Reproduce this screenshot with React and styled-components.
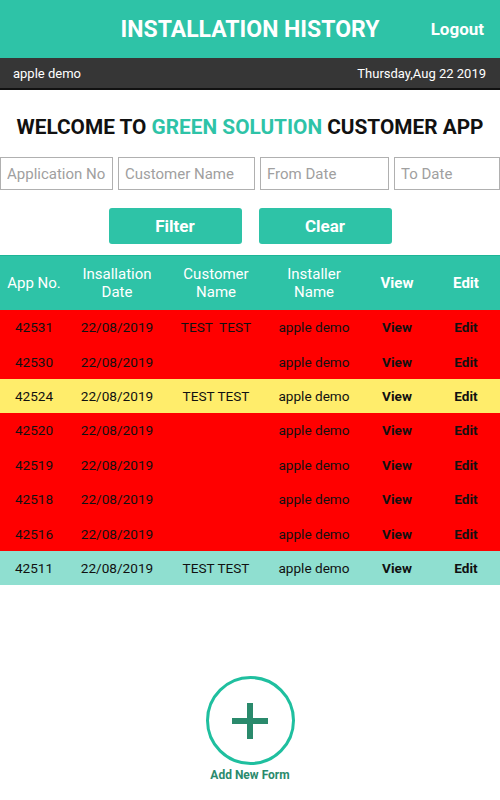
import styled, { createGlobalStyle } from 'styled-components';

const GlobalStyle = createGlobalStyle`
	body {
		margin: 0;
		font-family: Roboto, "Liberation Sans", sans-serif;
		background: #fff;
	}
`;

const teal = '#2ec3a7';

const Page = styled.div`
	display: flex;
	flex-direction: column;
	min-height: 800px;
`;

const Header = styled.header`
	display: grid;
	grid-template-columns: 1fr auto 1fr;
	align-items: center;
	height: 58px;
	background: ${teal};
	color: #fff;
	padding: 0 16px;
`;

const Title = styled.h1`
	grid-column: 2;
	margin: 0;
	font-size: 23px;
	font-weight: bold;
`;

const Logout = styled.span`
	justify-self: end;
	font-size: 17px;
	font-weight: bold;
`;

const UserBar = styled.div`
	display: flex;
	justify-content: space-between;
	align-items: center;
	height: 30px;
	padding: 0 14px 0 13px;
	background: #363636;
	border-bottom: 2px solid #111;
	color: #fff;
	font-size: 13px;
`;

const Welcome = styled.h2`
	margin: 25px 0 18px;
	text-align: center;
	font-size: 20.8px;
	font-weight: bold;
	color: #111;

	span {
		color: #2ec3a7;
	}
`;

const Filters = styled.div`
	display: grid;
	grid-template-columns: 113px 137px 129px 106px;
	gap: 5px;
`;

const Input = styled.input`
	height: 33px;
	box-sizing: border-box;
	border: 1px solid #b0b0b0;
	padding: 0 6px;
	font-family: inherit;
	font-size: 15px;
	min-width: 0;

	&::placeholder {
		color: #a0a0a0;
	}
`;

const Buttons = styled.div`
	display: flex;
	justify-content: center;
	gap: 17px;
	margin: 18px 0 11px;
`;

const Button = styled.button`
	width: 133px;
	height: 36px;
	border: none;
	border-radius: 3px;
	background: ${teal};
	color: #fff;
	font-family: inherit;
	font-size: 17px;
	font-weight: bold;
`;

const cols = '68px 98px 100px 96px 70px 68px';

const HeadRow = styled.div`
	display: grid;
	grid-template-columns: ${cols};
	align-items: center;
	height: 54px;
	background: ${teal};
	border-top: 1px solid #1db596;
	color: #fff;
	font-size: 15px;
	line-height: 18px;
	text-align: center;
`;

const HeadCell = styled.div`
	font-weight: ${(p) => (p.bold ? 'bold' : 'normal')};
`;

const rowColors = {
	red: '#ff0000',
	yellow: '#ffed6b',
	green: '#8fdfd0',
};

const Row = styled.div`
	display: grid;
	grid-template-columns: ${cols};
	align-items: center;
	height: 34.4px;
	background: ${(p) => rowColors[p.tone]};
	color: #111;
	font-size: 13.6px;
	text-align: center;
`;

const Cell = styled.div`
	font-weight: ${(p) => (p.bold ? 'bold' : 'normal')};
	white-space: pre;
`;

const Footer = styled.div`
	margin-top: auto;
	padding-bottom: 18px;
	display: flex;
	flex-direction: column;
	align-items: center;
	gap: 3px;
`;

const AddCircle = styled.div`
	width: 89px;
	height: 89px;
	box-sizing: border-box;
	border: 3px solid #1fbf9f;
	border-radius: 50%;
	display: flex;
	align-items: center;
	justify-content: center;
`;

const AddLabel = styled.span`
	font-size: 12px;
	font-weight: bold;
	color: #2a8a6c;
`;

const rows = [
	['42531', 'TEST  TEST', 'red'],
	['42530', '', 'red'],
	['42524', 'TEST TEST', 'yellow'],
	['42520', '', 'red'],
	['42519', '', 'red'],
	['42518', '', 'red'],
	['42516', '', 'red'],
	['42511', 'TEST TEST', 'green'],
];

const App = () => (
	<Page>
		<GlobalStyle />
		<Header>
			<Title>INSTALLATION HISTORY</Title>
			<Logout>Logout</Logout>
		</Header>
		<UserBar>
			<span>apple demo</span>
			<span>Thursday,Aug 22 2019</span>
		</UserBar>

		<Welcome>
			WELCOME TO <span>GREEN SOLUTION</span> CUSTOMER APP
		</Welcome>

		<Filters>
			<Input placeholder='Application No' />
			<Input placeholder='Customer Name' />
			<Input placeholder='From Date' />
			<Input placeholder='To Date' />
		</Filters>

		<Buttons>
			<Button>Filter</Button>
			<Button>Clear</Button>
		</Buttons>

		<HeadRow>
			<HeadCell>App No.</HeadCell>
			<HeadCell>Insallation<br />Date</HeadCell>
			<HeadCell>Customer<br />Name</HeadCell>
			<HeadCell>Installer<br />Name</HeadCell>
			<HeadCell bold>View</HeadCell>
			<HeadCell bold>Edit</HeadCell>
		</HeadRow>
		{rows.map(([no, name, tone]) => (
			<Row key={no} tone={tone}>
				<Cell>{no}</Cell>
				<Cell>22/08/2019</Cell>
				<Cell>{name}</Cell>
				<Cell>apple demo</Cell>
				<Cell bold>View</Cell>
				<Cell bold>Edit</Cell>
			</Row>
		))}

		<Footer>
			<AddCircle>
				<svg width='36' height='36' viewBox='0 0 36 36'>
					<path d='M18 0v36M0 18h36' stroke='#2a8a6c' strokeWidth='6' />
				</svg>
			</AddCircle>
			<AddLabel>Add New Form</AddLabel>
		</Footer>
	</Page>
);

export default App;
